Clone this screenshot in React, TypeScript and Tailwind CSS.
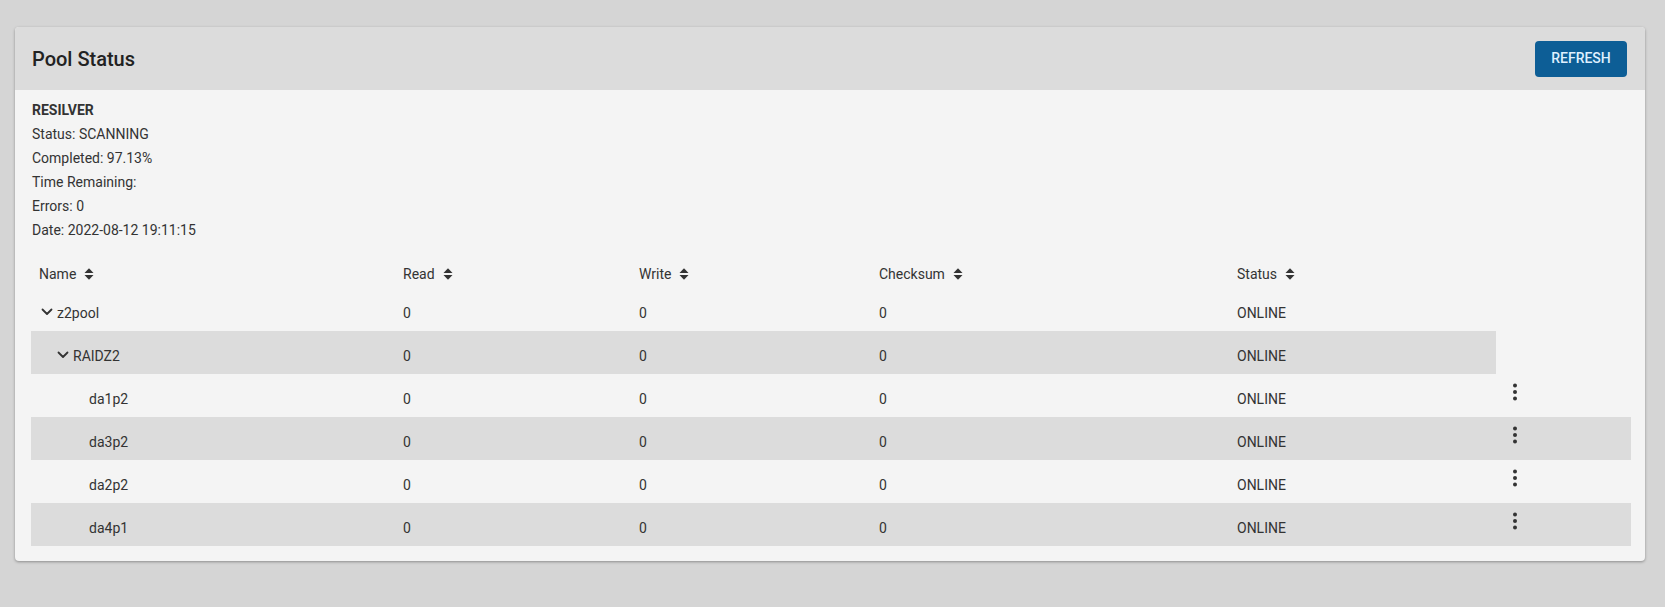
import React from "react";

const font = { fontFamily: "Roboto, 'Liberation Sans', Arial, sans-serif" };

function SortIcon() {
  return (
    <svg width="10" height="12" viewBox="0 0 10 12" className="ml-[8px] inline-block" fill="#333">
      <polygon points="0.5,5 5,0.3 9.5,5" />
      <polygon points="0.5,7 5,11.7 9.5,7" />
    </svg>
  );
}

function Chevron() {
  return (
    <svg width="16" height="16" viewBox="0 0 16 16" className="block">
      <polyline points="3.5,5.5 8,10 12.5,5.5" fill="none" stroke="#333" strokeWidth="1.8" strokeLinecap="round" strokeLinejoin="round" />
    </svg>
  );
}

function Kebab() {
  return (
    <svg width="24" height="24" viewBox="0 0 24 24" className="block">
      <circle cx="12" cy="5.5" r="2" fill="#333" />
      <circle cx="12" cy="12" r="2" fill="#333" />
      <circle cx="12" cy="18.5" r="2" fill="#333" />
    </svg>
  );
}

type Row = { name: string; level: number; expandable: boolean; action: boolean };

const rows: Row[] = [
  { name: "z2pool", level: 0, expandable: true, action: false },
  { name: "RAIDZ2", level: 1, expandable: true, action: false },
  { name: "da1p2", level: 2, expandable: false, action: true },
  { name: "da3p2", level: 2, expandable: false, action: true },
  { name: "da2p2", level: 2, expandable: false, action: true },
  { name: "da4p1", level: 2, expandable: false, action: true },
];

const indent = ["pl-[8px]", "pl-[24px]", "pl-[40px]"];

export default function App() {
  return (
    <div className="min-h-[607px] w-full bg-[#d5d5d5] pt-[27px] text-[#333]" style={font}>
      <div className="ml-[15px] w-[1630px] overflow-hidden rounded-[4px] bg-[#f4f4f4] shadow-[0_1px_3px_rgba(0,0,0,0.35)]">
        <div className="flex h-[63px] items-center justify-between bg-[#dcdcdc] pl-[17px] pr-[18px]">
          <h1 className="text-[20px] font-medium text-[#222]">Pool Status</h1>
          <button className="h-[36px] w-[92px] rounded-[4px] bg-[#0d5e96] text-[14px] font-medium text-[#dff0ff]">
            REFRESH
          </button>
        </div>
        <div className="pb-[15px] pl-[16px] pr-[14px] pt-[8px]">
          <div className="pl-[1px] text-[14px] leading-[24px]">
            <div className="font-bold">RESILVER</div>
            <div>Status: SCANNING</div>
            <div>Completed: 97.13%</div>
            <div>Time Remaining:</div>
            <div>Errors: 0</div>
            <div>Date: 2022-08-12 19:11:15</div>
          </div>
          <div className="mt-[8px] w-[1600px] text-[14px]">
            <div className="grid h-[38px] grid-cols-[364px_236px_240px_358px_267px_135px] pt-[9px] leading-[20px]">
              {["Name", "Read", "Write", "Checksum", "Status"].map((h) => (
                <div key={h} className="flex items-center pl-[8px]">
                  <span>{h}</span>
                  <SortIcon />
                </div>
              ))}
              <div />
            </div>
            {rows.map((r, i) => {
              const striped = i % 2 === 1;
              const bg = striped ? "bg-[#dcdcdc]" : "";
              const cellBg = r.action ? "" : bg;
              return (
                <div
                  key={r.name}
                  className={`grid h-[43px] grid-cols-[364px_236px_240px_358px_267px_135px] leading-[20px] ${
                    r.action ? bg : ""
                  }`}
                >
                  <div className={`flex items-start pt-[15px] ${indent[r.level]} ${cellBg}`}>
                    <div className="mr-[2px] mt-[1px] h-[16px] w-[16px]">{r.expandable ? <Chevron /> : null}</div>
                    <span>{r.name}</span>
                  </div>
                  <div className={`pl-[8px] pt-[15px] ${cellBg}`}>0</div>
                  <div className={`pl-[8px] pt-[15px] ${cellBg}`}>0</div>
                  <div className={`pl-[8px] pt-[15px] ${cellBg}`}>0</div>
                  <div className={`pl-[8px] pt-[15px] ${cellBg}`}>ONLINE</div>
                  <div className="pl-[7px] pt-[6px]">{r.action ? <Kebab /> : null}</div>
                </div>
              );
            })}
          </div>
        </div>
      </div>
    </div>
  );
}
